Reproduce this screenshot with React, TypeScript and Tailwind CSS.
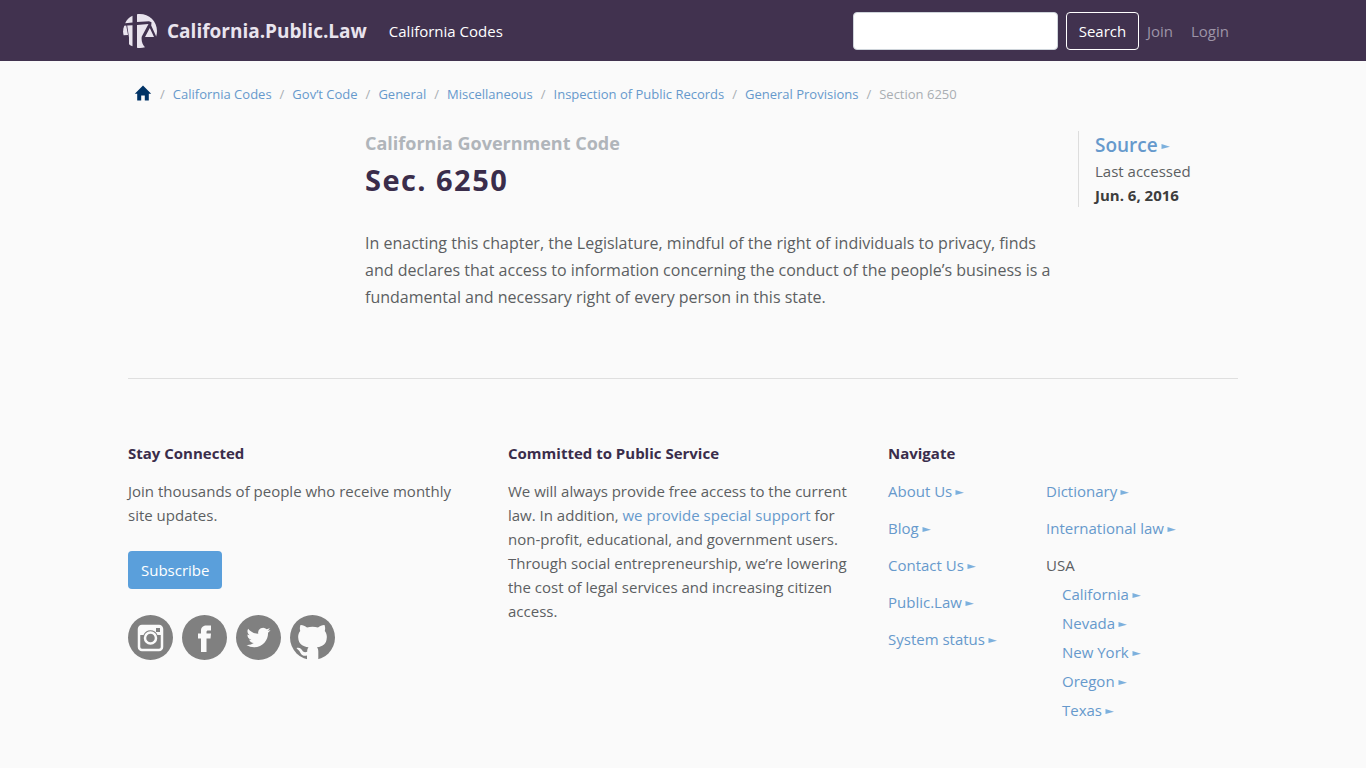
import type { ReactNode } from "react";

const breadcrumbs = [
  "California Codes",
  "Gov’t Code",
  "General",
  "Miscellaneous",
  "Inspection of Public Records",
  "General Provisions",
];

const siteLinks = ["About Us", "Blog", "Contact Us", "Public.Law", "System status"];

const referenceLinks = ["Dictionary", "International law"];

const states = ["California", "Nevada", "New York", "Oregon", "Texas"];

function Logo() {
  return (
    <svg viewBox="0 0 34 34" className="size-[34px]" fill="#e9e4ee" aria-hidden="true">
      <path d="M9.500 1.800V8.500L2.200 9.300C3.600 5.800 6.200 3.200 9.500 1.800Z" />
      <path d="M14 0.300C24.500 -1.300 34 6.500 34 17C34 19 33.700 20.800 33.200 22.500L28.200 11.500L28.500 8.300L26 7.200L14 8Z" />
      <path d="M1.300 11.800L3.200 11.600L5 21L0.600 21.200C-0.300 17.800 0 14.500 1.300 11.800Z" />
      <path d="M4.200 11.600L9.500 11.200V32.300C8.200 31.700 7 31 6 30.200V23.500Z" />
      <path d="M14 11L25.500 10L18.800 22.500C18 26.500 19.500 30.500 22 33.300C19.500 34 16.500 34.200 14 33.800Z" />
      <path d="M26.800 14L31 23H22Z" />
    </svg>
  );
}

function HomeIcon() {
  return (
    <svg viewBox="0 0 18 16" className="mb-[3px] h-4 w-[18px]" fill="#003366" aria-hidden="true">
      <path d="M9 0.500L17.200 8.700H14.800V15.500H10.800V10.500H7.200V15.500H3.200V8.700H0.800Z" />
    </svg>
  );
}

function Arrow() {
  return (
    <svg viewBox="0 0 9 5" className="ml-[3px] inline-block h-[5px] w-[9px]" fill="#7cb0dd" aria-hidden="true">
      <path d="M0.500 0L9 2.700L0.500 5Z" />
    </svg>
  );
}

function ArrowLink({ children }: { children: ReactNode }) {
  return (
    <a href="#" className="text-[#6699cc] hover:underline">
      {children}
      <Arrow />
    </a>
  );
}

function FooterHeading({ children }: { children: ReactNode }) {
  return <h3 className="mb-3.5 text-[15px] leading-6 font-bold text-[#3a2d4b]">{children}</h3>;
}

const socials = [
  {
    name: "Instagram",
    icon: (
      <>
        <circle cx="22.500" cy="22.500" r="22.500" fill="#808080" />
        <rect x="11" y="11" width="23" height="24" rx="3" fill="none" stroke="#fafafa" strokeWidth="2.500" />
        <path d="M11 11H34V20H29.500A7.500 7.500 0 0 0 15.500 20H11Z" fill="#fafafa" />
        <rect x="28" y="13" width="4" height="4" fill="#808080" />
        <circle cx="22.500" cy="23" r="7" fill="#808080" />
        <circle cx="22.500" cy="23" r="5.500" fill="none" stroke="#fafafa" strokeWidth="2.500" />
      </>
    ),
  },
  {
    name: "Facebook",
    icon: (
      <>
        <circle cx="22.500" cy="22.500" r="22.500" fill="#808080" />
        <path
          fill="#fafafa"
          d="M19 37V23.500H16V18.500H19V15.500C19 12 21.500 10.500 24.500 10.500H29V15.500H26C25 15.500 24.500 16 24.500 17V18.500H29L28.500 23.500H24.500V37Z"
        />
      </>
    ),
  },
  {
    name: "Twitter",
    icon: (
      <>
        <circle cx="22.500" cy="22.500" r="22.500" fill="#808080" />
        <path
          fill="#fafafa"
          transform="translate(10.500 10.500)"
          d="M23.950 4.570a10 10 0 0 1-2.820.770 4.960 4.960 0 0 0 2.160-2.720c-.950.550-2 .950-3.130 1.180a4.920 4.920 0 0 0-8.380 4.480C7.690 8.100 4.070 6.130 1.640 3.160a4.820 4.820 0 0 0-.670 2.480c0 1.710.870 3.210 2.190 4.100a4.900 4.900 0 0 1-2.230-.620v.060a4.920 4.920 0 0 0 3.950 4.830 5 5 0 0 1-2.210.080 4.940 4.940 0 0 0 4.600 3.420A9.870 9.870 0 0 1 0 19.540a13.990 13.990 0 0 0 7.550 2.210c9.050 0 14-7.500 14-13.980 0-.210 0-.420-.020-.630a9.940 9.940 0 0 0 2.460-2.550z"
        />
      </>
    ),
  },
  {
    name: "GitHub",
    icon: (
      <>
        <circle cx="22.500" cy="22.500" r="22.500" fill="#808080" />
        <path
          fill="#fafafa"
          d="M10.500 10C12.500 9.800 15 11 17 12.500C20.500 11.600 24.500 11.600 28 12.500C30 11 32.500 9.800 34.500 10C35.300 12 35.300 14 34.800 16C36.300 18 37 20 36.800 22.500C36.500 29 33 31.500 27 32.300C28 33.500 28.300 34.800 28.300 36.500V46H17V40.500C11.500 41.800 11 38.500 9.500 36.300C8.500 34.800 7 34.300 6.500 33C9.500 31.800 11.500 34 12.500 35.800C13.500 37.500 15.500 37.500 17.200 36.800C17.200 34.800 17.500 33.400 18.500 32.300C12.500 31.500 8.500 29 8.200 22.500C8 20 8.700 18 10.200 16C9.700 14 9.700 12 10.500 10Z"
        />
      </>
    ),
  },
];

function Header() {
  return (
    <header className="bg-[#41324f]">
      <div className="mx-auto flex h-[61px] w-full max-w-[1140px] items-center px-2.5">
        <a href="#" className="flex items-center gap-2.5 text-[19px] font-bold text-[#e9e4ee]">
          <Logo />
          California.Public.Law
        </a>
        <a href="#" className="ml-[22px] text-[15px] text-white">
          California Codes
        </a>
        <form className="mr-2 ml-auto flex items-center" onSubmit={(e) => e.preventDefault()}>
          <input
            type="text"
            aria-label="Search"
            className="h-[38px] w-[205px] rounded border border-[#ced4da] bg-white px-3 text-[15px]"
          />
          <button
            type="submit"
            className="ml-2 h-[38px] w-[73px] rounded border border-white text-[15px] text-white"
          >
            Search
          </button>
        </form>
        <nav className="mr-3.5 flex gap-[18px] text-[15px] text-[#9d94a7]">
          <a href="#">Join</a>
          <a href="#">Login</a>
        </nav>
      </div>
    </header>
  );
}

function Breadcrumb() {
  return (
    <nav aria-label="Breadcrumb" className="pt-[22px] pl-1.5">
      <ol className="flex items-center text-[13px] leading-[22px]">
        <li>
          <a href="#" aria-label="Home">
            <HomeIcon />
          </a>
        </li>
        {breadcrumbs.map((label) => (
          <li key={label} className="flex">
            <span className="px-2 text-[#a9aeb3]">/</span>
            <a href="#" className="text-[#6699cc]">
              {label}
            </a>
          </li>
        ))}
        <li className="flex text-[#a9aeb3]">
          <span className="px-2">/</span>
          Section 6250
        </li>
      </ol>
    </nav>
  );
}

export default function App() {
  return (
    <div className="min-h-screen bg-[#fafafa] font-['Open_Sans',sans-serif] text-[15px] leading-6 text-[#5c5f62]">
      <Header />
      <div className="mx-auto w-full max-w-[1140px] px-[15px]">
        <Breadcrumb />

        <main className="mt-[26px] flex">
          <article className="ml-auto w-[713px] pr-6">
            <h2 className="text-lg leading-6 font-bold text-[#b0b5ba]">California Government Code</h2>
            <h1 className="mt-[7px] text-[29px] leading-9 font-bold tracking-wider text-[#3a2d4b]">Sec. 6250</h1>
            <p className="mt-8 text-base leading-[27px]">
              In enacting this chapter, the Legislature, mindful of the right of individuals to privacy, finds and
              declares that access to information concerning the conduct of the people’s business is a fundamental and
              necessary right of every person in this state.
            </p>
          </article>
          <aside className="h-[76px] w-40 border-l border-[#dddddd] pl-4">
            <p className="text-[19px] leading-7 font-semibold">
              <ArrowLink>Source</ArrowLink>
            </p>
            <p>Last accessed</p>
            <p className="font-bold text-[#3d3d3d]">Jun. 6, 2016</p>
          </aside>
        </main>

        <footer className="mt-[67px] grid grid-cols-3 gap-[30px] border-t border-[#dfdfdf] pt-[62px] pb-10">
          <section>
            <FooterHeading>Stay Connected</FooterHeading>
            <p>Join thousands of people who receive monthly site updates.</p>
            <button type="button" className="mt-6 h-[38px] rounded bg-[#5a9fdb] px-[13px] text-[15px] text-white">
              Subscribe
            </button>
            <div className="mt-[26px] flex gap-[9px]">
              {socials.map((social) => (
                <a key={social.name} href="#" aria-label={social.name}>
                  <svg viewBox="0 0 45 45" className="size-[45px]" aria-hidden="true">
                    {social.icon}
                  </svg>
                </a>
              ))}
            </div>
          </section>

          <section>
            <FooterHeading>Committed to Public Service</FooterHeading>
            <p>
              We will always provide free access to the current law. In addition,{" "}
              <a href="#" className="text-[#6699cc]">
                we provide special support
              </a>{" "}
              for non-profit, educational, and government users. Through social entrepreneurship, we’re lowering the
              cost of legal services and increasing citizen access.
            </p>
          </section>

          <section>
            <FooterHeading>Navigate</FooterHeading>
            <div className="flex">
              <ul className="w-[158px] space-y-[13px]">
                {siteLinks.map((label) => (
                  <li key={label}>
                    <ArrowLink>{label}</ArrowLink>
                  </li>
                ))}
              </ul>
              <ul className="space-y-[13px]">
                {referenceLinks.map((label) => (
                  <li key={label}>
                    <ArrowLink>{label}</ArrowLink>
                  </li>
                ))}
                <li>
                  USA
                  <ul className="mt-[5px] space-y-[5px] pl-4">
                    {states.map((label) => (
                      <li key={label}>
                        <ArrowLink>{label}</ArrowLink>
                      </li>
                    ))}
                  </ul>
                </li>
              </ul>
            </div>
          </section>
        </footer>
      </div>
    </div>
  );
}
